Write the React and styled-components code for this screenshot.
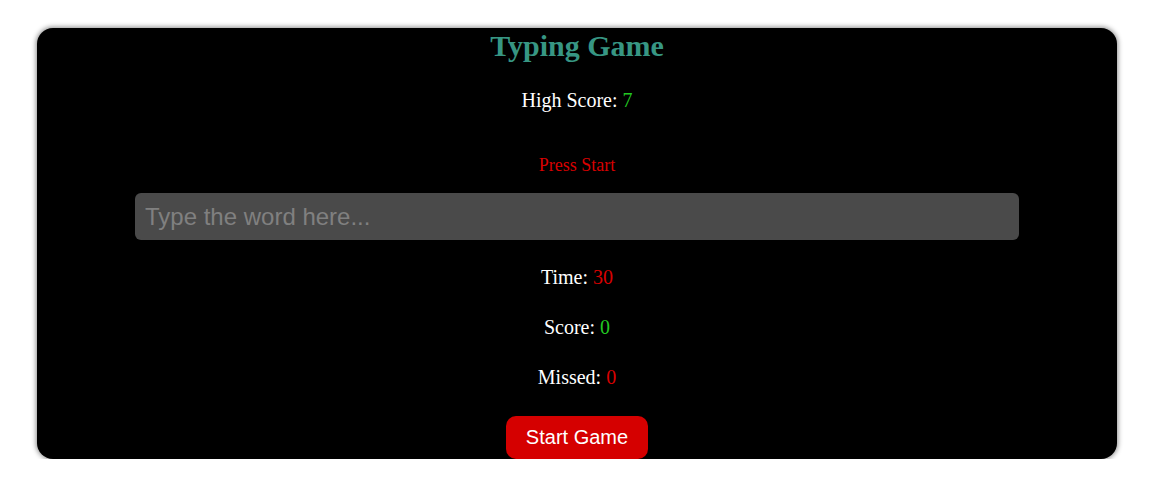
import React, { useState } from 'react'
import styled, { createGlobalStyle } from 'styled-components'

const GlobalStyle = createGlobalStyle`
  html, body {
    margin: 0;
    padding: 0;
    background: #ffffff;
  }
  body {
    font-family: "Liberation Serif", "Times New Roman", serif;
  }
`

const Page = styled.div`
  padding: 28px 43px 0 37px;
`

const Card = styled.div`
  width: 1080px;
  height: 431px;
  box-sizing: border-box;
  background: #000000;
  border-radius: 16px;
  box-shadow: 0 0 5px 1px rgba(0, 0, 0, 0.45);
  display: flex;
  flex-direction: column;
  align-items: center;
  overflow: hidden;
`

const Title = styled.h1`
  margin: 0;
  font-size: 30px;
  line-height: 35px;
  font-weight: bold;
  color: #379683;
`

const Stat = styled.p`
  margin: ${props => props.gap}px 0 0;
  font-size: 20px;
  line-height: 23px;
  color: #ffffff;
`

const Value = styled.span`
  color: ${props => (props.good ? '#22c922' : '#d80000')};
`

const Message = styled.p`
  margin: 43px 0 0;
  font-size: 18px;
  line-height: 21px;
  color: #d80000;
`

const WordInput = styled.input`
  margin-top: 17px;
  width: 80%;
  height: 48px;
  box-sizing: content-box;
  padding: 0 10px;
  border: none;
  border-radius: 6px;
  background: #4a4a4a;
  color: #ffffff;
  font-family: "Liberation Sans", Arial, sans-serif;
  font-size: 24px;
  outline: none;

  &::placeholder {
    color: #808080;
  }
`

const StartButton = styled.button`
  margin-top: 27px;
  padding: 10px 20px;
  border: none;
  border-radius: 10px;
  background: #d50000;
  color: #ffffff;
  font-family: "Liberation Sans", Arial, sans-serif;
  font-size: 20px;
  line-height: 23px;
  cursor: pointer;
`

export default function App() {
  const [word, setWord] = useState('')

  return (
    <>
      <GlobalStyle />
      <Page>
        <Card>
          <Title>Typing Game</Title>
          <Stat gap={26}>
            High Score: <Value good>7</Value>
          </Stat>
          <Message>Press Start</Message>
          <WordInput
            placeholder="Type the word here..."
            value={word}
            onChange={e => setWord(e.target.value)}
          />
          <Stat gap={26}>
            Time: <Value>30</Value>
          </Stat>
          <Stat gap={27}>
            Score: <Value good>0</Value>
          </Stat>
          <Stat gap={27}>
            Missed: <Value>0</Value>
          </Stat>
          <StartButton>Start Game</StartButton>
        </Card>
      </Page>
    </>
  )
}
